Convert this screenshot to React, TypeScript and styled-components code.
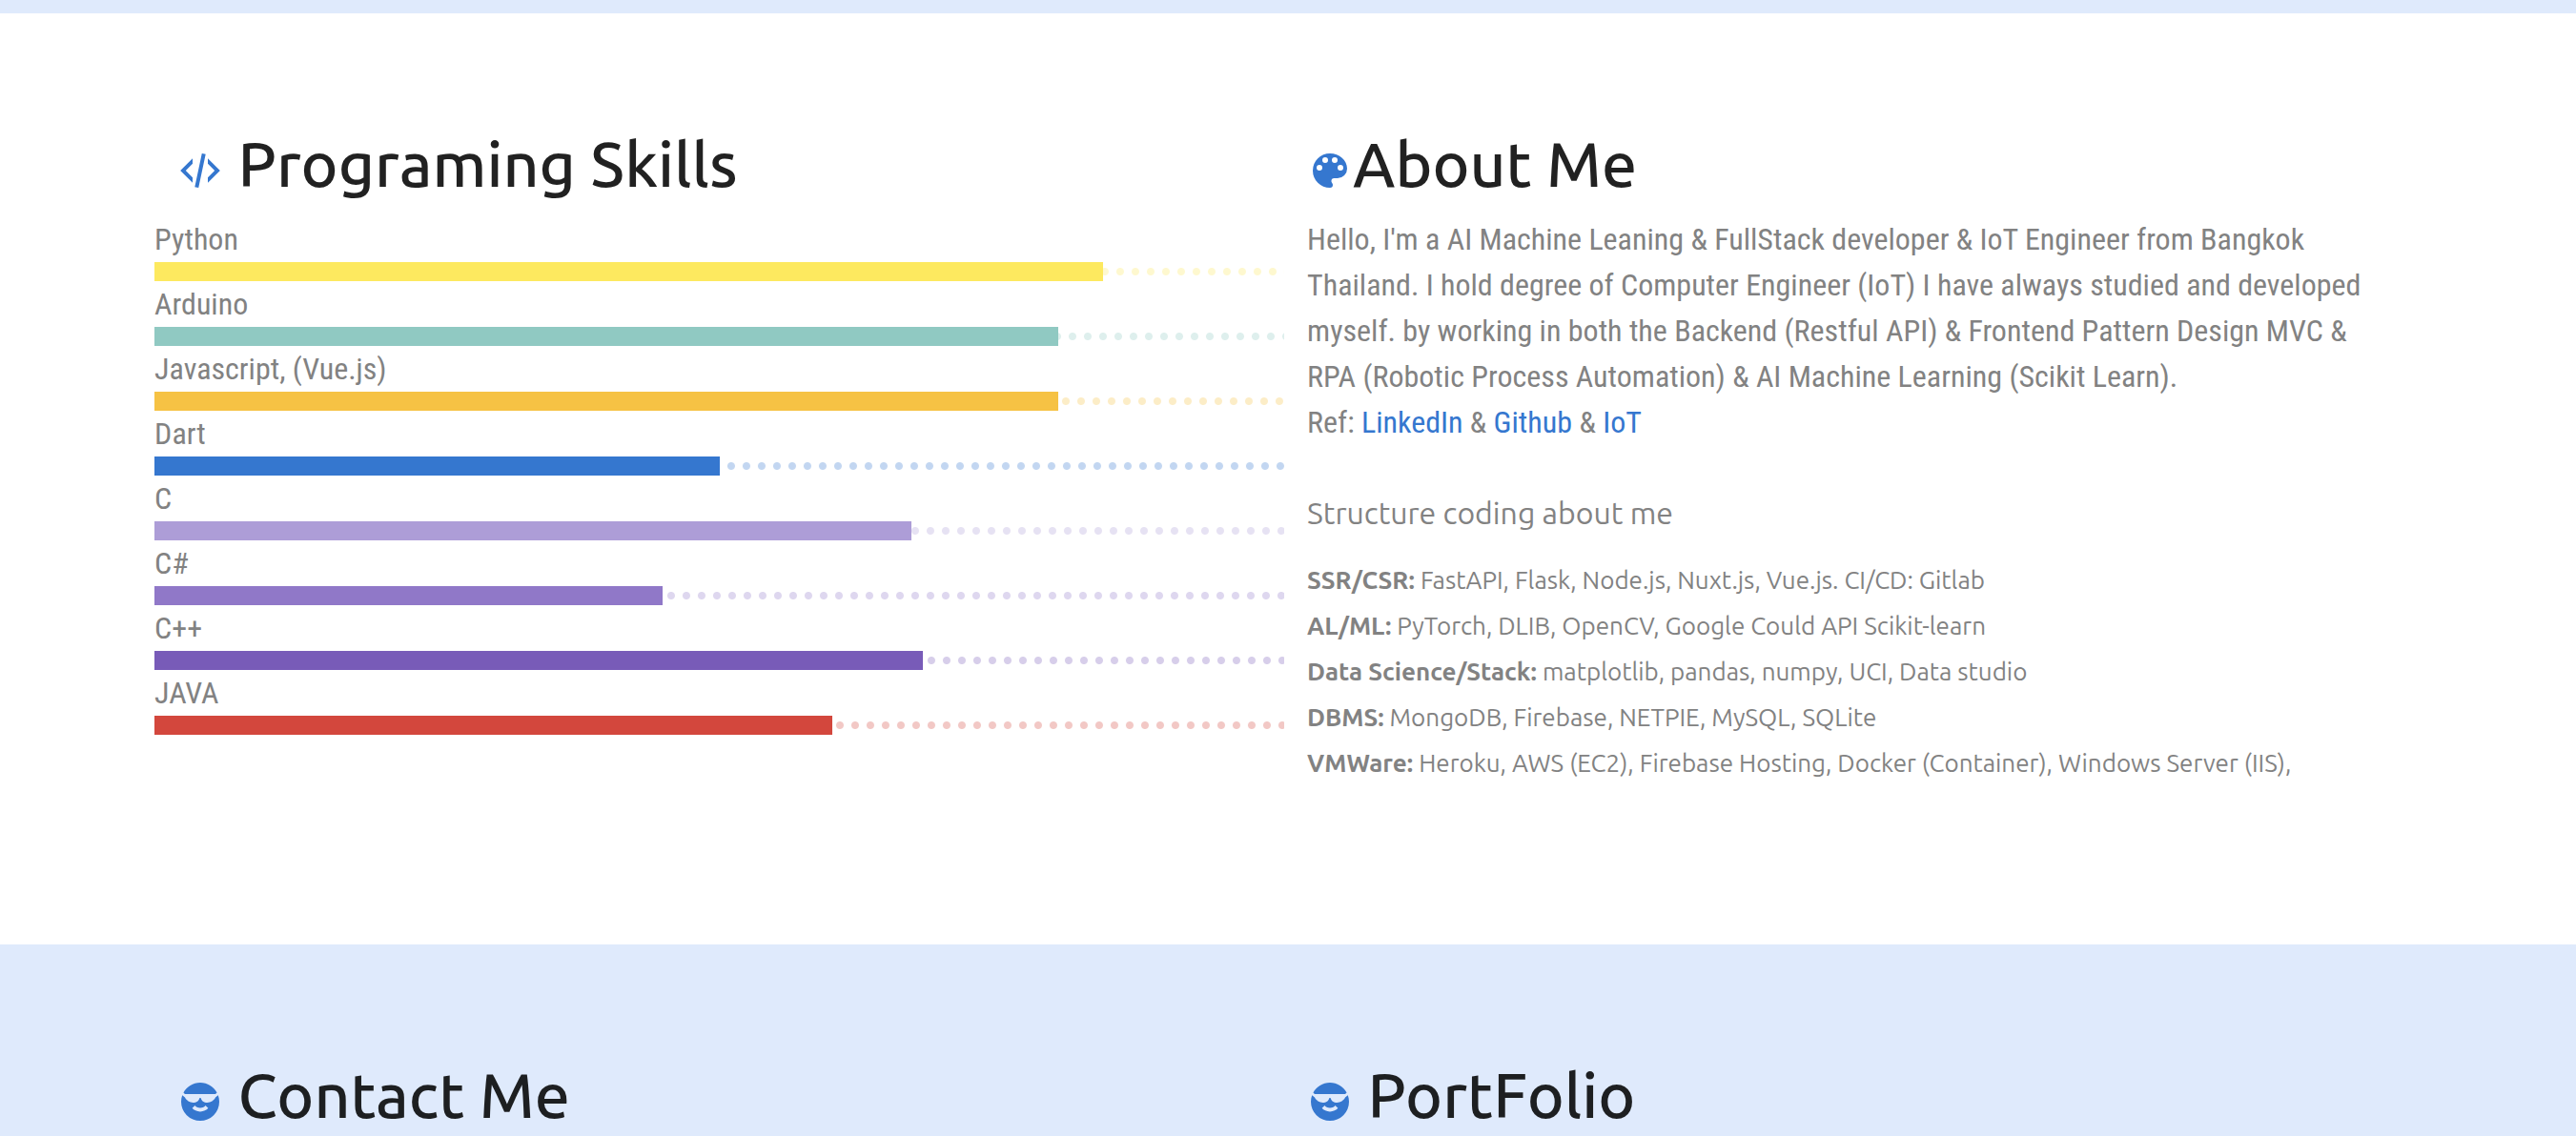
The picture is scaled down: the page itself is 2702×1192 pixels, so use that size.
import React from "react";
import styled, { createGlobalStyle } from "styled-components";

const GlobalStyle = createGlobalStyle`
  *, *::before, *::after { box-sizing: border-box; }
  body {
    margin: 0;
    background: #fff;
    color: #828282;
    font-family: "Roboto Condensed", Roboto, "Liberation Sans", sans-serif;
    font-size: 32px;
    line-height: 48px;
  }
`;

const Page = styled.div`
  display: flex;
  flex-direction: column;
  min-height: 100vh;
`;

const HeroEdge = styled.div`
  height: 14px;
  background: #dfeafc;
`;

const Section = styled.section<{ $tinted?: boolean }>`
  display: grid;
  grid-template-columns: repeat(2, minmax(0, 1fr));
  align-content: start;
  column-gap: 24px;
  padding: 117px 146px ${(p) => (p.$tinted ? "0" : "166px")} 6%;
  background: ${(p) => (p.$tinted ? "#dfeafc" : "#fff")};
  flex-grow: ${(p) => (p.$tinted ? 1 : 0)};
`;

const Column = styled.div``;

const Heading = styled.h2<{ $indented?: boolean }>`
  margin: 0;
  padding-left: ${(p) => (p.$indented ? "24px" : "0")};
  color: rgba(0, 0, 0, 0.87);
  font-family: Ubuntu, "Noto Sans", sans-serif;
  font-size: 66px;
  font-weight: 500;
  line-height: 80px;
`;

const Glyph = styled.svg`
  width: 48px;
  height: 48px;
  fill: #3577cf;
  vertical-align: middle;
`;

const Body = styled.div`
  margin-top: 16px;
`;

const SkillList = styled.ul`
  margin: 16px 0 0;
  padding: 0;
  list-style: none;
`;

const SkillName = styled.span`
  display: block;
`;

const Track = styled.div<{ $color: string; $phase: number }>`
  position: relative;
  height: 20px;

  &::before {
    content: "";
    position: absolute;
    inset: 0;
    opacity: 0.3;
    background-image: radial-gradient(circle, ${(p) => p.$color} 3.5px, transparent 4.5px);
    background-size: 16px 20px;
    background-position: right ${(p) => p.$phase}px center;
    background-repeat: repeat-x;
  }
`;

const Fill = styled.div<{ $color: string }>`
  position: relative;
  height: 100%;
  background: ${(p) => p.$color};
`;

const Intro = styled.p`
  margin: 0;
  padding-right: 60px;
`;

const Link = styled.a`
  color: #3577cf;
  text-decoration: none;
`;

const Subheading = styled.h3`
  margin: 47px 0 23px;
  font-family: Ubuntu, "Noto Sans", sans-serif;
  font-size: 32px;
  font-weight: 400;
  line-height: 48px;
`;

const StackList = styled.ul`
  margin: 0;
  padding: 0;
  list-style: none;
  font-family: Ubuntu, "Noto Sans", sans-serif;
  font-size: 26px;
  line-height: 48px;
`;

const StackName = styled.strong`
  font-weight: 700;
`;

const icons = {
  code: "M12.89,3L14.85,3.4L11.11,21L9.15,20.6L12.89,3M19.59,12L16,8.41V5.58L22.42,12L16,18.41V15.58L19.59,12M1.58,12L8,5.58V8.41L4.41,12L8,15.58V18.41L1.58,12Z",
  palette:
    "M17.5,12A1.5,1.5 0 0,1 16,10.5A1.5,1.5 0 0,1 17.5,9A1.5,1.5 0 0,1 19,10.5A1.5,1.5 0 0,1 17.5,12M14.5,8A1.5,1.5 0 0,1 13,6.5A1.5,1.5 0 0,1 14.5,5A1.5,1.5 0 0,1 16,6.5A1.5,1.5 0 0,1 14.5,8M9.5,8A1.5,1.5 0 0,1 8,6.5A1.5,1.5 0 0,1 9.5,5A1.5,1.5 0 0,1 11,6.5A1.5,1.5 0 0,1 9.5,8M6.5,12A1.5,1.5 0 0,1 5,10.5A1.5,1.5 0 0,1 6.5,9A1.5,1.5 0 0,1 8,10.5A1.5,1.5 0 0,1 6.5,12M12,3A9,9 0 0,0 3,12A9,9 0 0,0 12,21A1.5,1.5 0 0,0 13.5,19.5C13.5,19.11 13.35,18.76 13.11,18.5C12.88,18.23 12.73,17.88 12.73,17.5A1.5,1.5 0 0,1 14.23,16H16A5,5 0 0,0 21,11C21,6.58 16.97,3 12,3Z",
  cool: "M3.22,7.22C4.91,4.11 8.21,2 12,2C15.79,2 19.09,4.11 20.78,7.22L20,8H4L3.22,7.22M21.4,8.6C21.78,9.67 22,10.81 22,12A10,10 0 0,1 12,22A10,10 0 0,1 2,12C2,10.81 2.22,9.67 2.6,8.6L4,9.8C4.8,11.4 6.5,12.5 8.3,12.5C10,12.5 11.4,11.5 11.7,10H12.3C12.6,11.5 14,12.5 15.7,12.5C17.5,12.5 19.2,11.4 20,9.8L21.4,8.6M16.19,15.42L14.77,14C14.32,14.72 13.25,15.23 12,15.23C10.75,15.23 9.68,14.72 9.23,14L7.81,15.42C8.71,16.5 10.25,17.23 12,17.23C13.75,17.23 15.29,16.5 16.19,15.42Z",
};

function Icon({ name }: { name: keyof typeof icons }) {
  return (
    <Glyph viewBox="0 0 24 24" aria-hidden="true">
      <path fillRule="evenodd" d={icons[name]} />
    </Glyph>
  );
}

// phase: how far the dotted stream of each bar has travelled, in px
const skills = [
  { name: "Python", value: 84, color: "#fde95f", phase: 4 },
  { name: "Arduino", value: 80, color: "#90c9c2", phase: 6 },
  { name: "Javascript, (Vue.js)", value: 80, color: "#f6c244", phase: -3 },
  { name: "Dart", value: 50, color: "#3577cf", phase: -4 },
  { name: "C", value: 67, color: "#ad9dd7", phase: -5 },
  { name: "C#", value: 45, color: "#9078c8", phase: -5 },
  { name: "C++", value: 68, color: "#785bb8", phase: -6 },
  { name: "JAVA", value: 60, color: "#d3473d", phase: -6 },
];

const stack = [
  ["SSR/CSR:", "FastAPI, Flask, Node.js, Nuxt.js, Vue.js. CI/CD: Gitlab"],
  ["AL/ML:", "PyTorch, DLIB, OpenCV, Google Could API Scikit-learn"],
  ["Data Science/Stack:", "matplotlib, pandas, numpy, UCI, Data studio"],
  ["DBMS:", "MongoDB, Firebase, NETPIE, MySQL, SQLite"],
  ["VMWare:", "Heroku, AWS (EC2), Firebase Hosting, Docker (Container), Windows Server (IIS),"],
];

export default function App() {
  return (
    <>
      <GlobalStyle />
      <Page>
        <HeroEdge />
        <Section>
          <Column>
            <Heading $indented>
              <Icon name="code" /> Programing Skills
            </Heading>
            <SkillList>
              {skills.map((s, i) => (
                <li key={s.name}>
                  <SkillName id={`skill-${i}`}>{s.name}</SkillName>
                  <Track
                    $color={s.color}
                    $phase={s.phase}
                    role="progressbar"
                    aria-labelledby={`skill-${i}`}
                    aria-valuenow={s.value}
                    aria-valuemin={0}
                    aria-valuemax={100}
                  >
                    <Fill $color={s.color} style={{ width: `${s.value}%` }} />
                  </Track>
                </li>
              ))}
            </SkillList>
          </Column>
          <Column>
            <Heading>
              <Icon name="palette" />
              About Me
            </Heading>
            <Body>
              <Intro>
                Hello, I'm a AI Machine Leaning &amp; FullStack developer &amp; IoT Engineer from
                Bangkok Thailand. I hold degree of Computer Engineer (IoT) I have always studied and
                developed myself. by working in both the Backend (Restful API) &amp; Frontend Pattern
                Design MVC &amp; RPA (Robotic Process Automation) &amp; AI Machine Learning (Scikit
                Learn).
                <br />
                Ref: <Link href="#linkedin">LinkedIn</Link> &amp; <Link href="#github">Github</Link>{" "}
                &amp; <Link href="#iot">IoT</Link>
              </Intro>
              <Subheading>Structure coding about me</Subheading>
              <StackList>
                {stack.map(([name, items]) => (
                  <li key={name}>
                    <StackName>{name}</StackName> {items}
                  </li>
                ))}
              </StackList>
            </Body>
          </Column>
        </Section>
        <Section $tinted>
          <Column>
            <Heading $indented>
              <Icon name="cool" /> Contact Me
            </Heading>
          </Column>
          <Column>
            <Heading>
              <Icon name="cool" /> PortFolio
            </Heading>
          </Column>
        </Section>
      </Page>
    </>
  );
}
